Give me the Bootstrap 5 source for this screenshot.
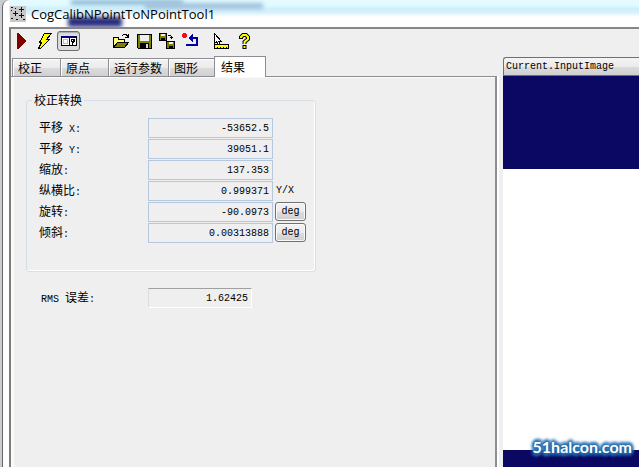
<!DOCTYPE html>
<html lang="zh-CN">
<head>
<meta charset="utf-8">
<meta name="viewport" content="width=device-width, initial-scale=1">
<title>CogCalibNPointToNPointTool1</title>
<link href="https://cdn.jsdelivr.net/npm/bootstrap@5.3.0/dist/css/bootstrap.min.css" rel="stylesheet">
<style>
body{font:12px/18px "Noto Sans CJK SC",sans-serif;color:#000;background:#c9ccd0;padding-left:2px}
.lat{font-family:"Liberation Mono",monospace;font-size:10px}
.win{border-left:1px solid #666;background:#fff;border-top-left-radius:7px;padding-left:6px}
.titlebar{height:27px;padding-left:1px;background:linear-gradient(#e4fbff 0,#e0faff 5px,#cfeefb 9px,#d5f0fb 12px,#fff 17px)}
.titlebar h1{font:13px/24px "Open Sans",sans-serif;padding-left:5px}
.smear{position:absolute;filter:blur(2px)}
.smear-a{left:59px;top:17px;width:54px;height:10px;background:#2a3080;filter:blur(2px)}
.smear-b{left:62px;top:0;width:112px;height:5px;background:#8db8d6}
.smear-c{left:136px;top:3px;width:118px;height:6px;background:#a0c0dc}
.client{border-left:2px solid #7d7d7d;border-top:2px solid #868686;background:#efefef;position:relative}
.toolbar{height:27px;padding-top:2px}
.tool{width:23px;height:20px;padding:0;border:1px solid transparent;background:none;border-radius:3px;display:flex;align-items:center;justify-content:center}
.tool.pressed{border-color:#6c6c6c;background:#dcdcdc;box-shadow:inset 0 1px 1px #aaa}
.tool.gap-before{margin-left:29px}
.left-pane{flex:486 1 0;min-width:0}
.right-pane{flex:136 1 0;min-width:0;margin-top:1px}
.splitter{width:6px;margin-top:20px;border-left:2px solid #fff}
.tabs{height:21px;padding-left:1px;position:relative;z-index:1;margin-bottom:-1px}
.tab{height:19px;border:1px solid #8c8e94;border-right-width:0;background:linear-gradient(#f3f3f3,#ebebeb 50%,#dcdcdc 51%,#d0d0d0);padding:0 5px;line-height:18px;text-align:left;box-shadow:inset 1px 1px #fff}
.w-a{width:48px}.w-b{width:60px}.w-c{width:46px}
.tab.chosen{width:52px;height:21px;border-width:1px 1px 0;background:#fff;padding-left:6px;line-height:18px;box-shadow:none}
.page{border:1px solid #8c8e94;border-width:1px 2px 0 0;box-shadow:inset 3px 1px #fafafa;padding:14px 0 0 15px}
.group{width:290px;height:181px;border:1px solid #d5dfe5;border-radius:3px;box-shadow:inset -1px -1px #fff;padding:0 0 0 12px}
.group legend{width:auto;float:none;font-size:12px;line-height:18px;margin:0 0 0 -7px;padding:0 2px}
.fields{padding-top:9px}
.line{height:21px}
.line label{width:109px;line-height:18px}
.unit{line-height:20px;padding-left:3px}
.val{width:125px;height:20px;border:1px solid #b4c7dc;background:#efefef;border-radius:0;padding:0 3px;text-align:right;font:10px/18px "Liberation Mono",monospace;color:#000}
.val.sunk{width:104px;border-color:#a0a0a0 #fff #fff #dcdcdc}
.deg{width:31px;height:19px;margin-left:2px;border:1px solid #707070;border-radius:3px;background:linear-gradient(#f2f2f2,#ebebeb 50%,#ddd 51%,#cfcfcf);box-shadow:inset 0 0 0 1px #fafafa;padding:0;line-height:17px}
.rms{padding:16px 0 0 15px}
.rms label{width:107px;line-height:18px}
.pick{height:19px;border:1px solid #707070;border-right:0;border-radius:3px 0 0 0;background:linear-gradient(#f4f4f4,#ebebeb 50%,#dcdcdc 51%,#cfcfcf);padding:0 2px;line-height:17px;text-align:left}
.navy{background:#0a0862}
.band-top{height:93px}.band-low{height:17px}
.brand{position:absolute;right:7px;bottom:9px;font:700 16px/22px Lato,sans-serif;color:#fff;text-shadow:0 0 2px #2268a8,0 0 2px #2268a8,0 0 3px #2268a8,2px 1px 3px #2f78b8,-2px -1px 3px #2f78b8,-2px 2px 3px #2f78b8,2px -2px 3px #2f78b8,0 3px 3px #2f78b8,0 -3px 3px #2f78b8;text-decoration:none}
</style>
<script src="https://cdn.jsdelivr.net/npm/bootstrap@5.3.0/dist/js/bootstrap.bundle.min.js"></script>
</head>
<body class="min-vh-100 d-flex flex-column">
<div class="win flex-grow-1 d-flex flex-column overflow-hidden">
<header class="titlebar d-flex align-items-center position-relative">
<i class="smear smear-a"></i><i class="smear smear-b"></i><i class="smear smear-c"></i>
<svg class="position-relative" width="16" height="16" shape-rendering="crispEdges" aria-hidden="true"><path fill="#c8c8c8" d="M0 0h16v16H0z"/><path stroke="#111" d="M9 3.500h5M11.500 1v5M3 7.500h5M5.500 5v5M9 9.500h5M11.500 7v5M1 1.500h2M5 2.500h1M1 12.500h2M6 13.500h2M13 13.500h2M1 4.500h1"/></svg>
<h1 class="m-0 position-relative">CogCalibNPointToNPointTool1</h1>
</header>
<main class="client flex-grow-1 d-flex flex-column">
<div class="toolbar d-flex" role="toolbar">
<button class="tool" aria-label="运行"><svg width="18" height="18" shape-rendering="crispEdges"><path fill="#800000" d="M3 1h1l8 8-8 8H3z"/></svg></button>
<button class="tool" aria-label="电子模式"><svg width="18" height="18" shape-rendering="crispEdges"><path fill="#ff0" stroke="#000" d="M7.500 1.500h7l-5 6h3l-9 9H1.500l3-6h-2z"/></svg></button>
<button class="tool pressed" aria-label="显示面板" aria-pressed="true"><svg width="18" height="18" shape-rendering="crispEdges"><path fill="#fff" stroke="#000" d="M1.500 4.500h15v9h-15z"/><path fill="#000080" d="M2 4h14v2H2z"/><path fill="#bbb" d="M3 7h5v5H3z"/><path fill="#fff" d="M4 8h3v3H4z"/><path stroke="#000" d="M9.500 5v8"/><path fill="#000" d="M11 7h4v3h-1v1h-1v2h-1v-3h-1z"/><path fill="#fff" d="M12 8h1v1h-1z"/></svg></button>
<button class="tool gap-before" aria-label="打开"><svg width="18" height="18" shape-rendering="crispEdges"><path fill="#ffff80" stroke="#000" d="M1.500 15.500v-10h5v2h6v3"/><path fill="#808000" stroke="#000" d="M1.500 15.500l4-5h11l-4 5z"/><path fill="none" stroke="#000" d="M10 3.500l2-1h2l2 2M16.500 2v4M13 5.500h3"/></svg></button>
<button class="tool" aria-label="保存"><svg width="18" height="18" shape-rendering="crispEdges"><path fill="#808000" stroke="#000" d="M2.500 2.500h14v14h-13l-1-1z"/><path fill="#efefef" d="M5 3h9v6H5z"/><path fill="#000" d="M5 11h9v5H5z"/><path fill="#ddd" d="M11 12h2v4h-2z"/></svg></button>
<button class="tool" aria-label="另存为"><svg width="18" height="18" shape-rendering="crispEdges"><path fill="#808000" stroke="#000" d="M1.500 1.500h7v7h-7zM8.500 9.500h8v7h-8z"/><path fill="#eee" d="M3 2h4v2H3zM11 10h4v2h-4z"/><path fill="#000" d="M3 6h4v2H3zM11 14h4v2h-4z"/><path stroke="#000" d="M10 3.500h3M13.500 4v3M12 5.500h3"/></svg></button>
<button class="tool" aria-label="重置"><svg width="18" height="18" shape-rendering="crispEdges"><path fill="#e11" d="M2 1h3v1h1v3H5v1H2V5H1V2h1z"/><path fill="#0000a0" d="M7 6l5-5v4h5v9H5v-2h10V7h-3v4z"/></svg></button>
<button class="tool ms-2" aria-label="测量"><svg width="18" height="18" shape-rendering="crispEdges"><path fill="#fff" stroke="#000" d="M2.500 1.500v10l2-2 2 4 2-1-2-3h3z"/><path fill="#ff0" stroke="#000" d="M2.500 12.500h14v4h-14z"/><path stroke="#000" d="M5.500 15v1M8.500 15v1M11.500 15v1M14.500 15v1"/></svg></button>
<button class="tool" aria-label="帮助"><svg width="18" height="18"><path fill="none" stroke="#000" stroke-width="4" d="M6 7V5l2-2h3l2 2v2L9.500 10v2"/><path fill="#000" d="M7.500 13h4v4h-4z"/><path fill="none" stroke="#ff0" stroke-width="2" d="M6 6V5l2-2h3l2 2v2L9.500 10v2"/><path fill="#ff0" d="M8.500 14h2v2h-2z"/></svg></button>
</div>
<div class="flex-grow-1 d-flex">
<section class="left-pane d-flex flex-column">
<div class="tabs d-flex align-items-end" role="tablist">
<button class="tab w-a" role="tab">校正</button>
<button class="tab w-a" role="tab">原点</button>
<button class="tab w-b" role="tab">运行参数</button>
<button class="tab w-c" role="tab">图形</button>
<button class="tab chosen" role="tab" aria-selected="true">结果</button>
</div>
<div class="page flex-grow-1" role="tabpanel">
<fieldset class="group">
<legend>校正转换</legend>
<div class="fields">
<div class="line d-flex"><label for="tx">平移<span class="lat"> X:</span></label><input class="val" id="tx" readonly value="-53652.5"></div>
<div class="line d-flex"><label for="ty">平移<span class="lat"> Y:</span></label><input class="val" id="ty" readonly value="39051.1"></div>
<div class="line d-flex"><label for="sc">缩放<span class="lat">:</span></label><input class="val" id="sc" readonly value="137.353"></div>
<div class="line d-flex"><label for="as">纵横比<span class="lat">:</span></label><input class="val" id="as" readonly value="0.999371"><span class="lat unit">Y/X</span></div>
<div class="line d-flex"><label for="ro">旋转<span class="lat">:</span></label><input class="val" id="ro" readonly value="-90.0973"><button class="deg lat">deg</button></div>
<div class="line d-flex"><label for="sk">倾斜<span class="lat">:</span></label><input class="val" id="sk" readonly value="0.00313888"><button class="deg lat">deg</button></div>
</div>
</fieldset>
<div class="rms d-flex"><label for="rms"><span class="lat">RMS </span>误差<span class="lat">:</span></label><input class="val sunk" id="rms" readonly value="1.62425"></div>
</div>
</section>
<div class="splitter"></div>
<section class="right-pane d-flex flex-column position-relative">
<button class="pick lat">Current.InputImage</button>
<div class="navy band-top"></div>
<div class="bg-white flex-grow-1"></div>
<div class="navy band-low"></div>
<a class="brand" href="#">51halcon.com</a>
</section>
</div>
</main>
</div>
</body>
</html>
